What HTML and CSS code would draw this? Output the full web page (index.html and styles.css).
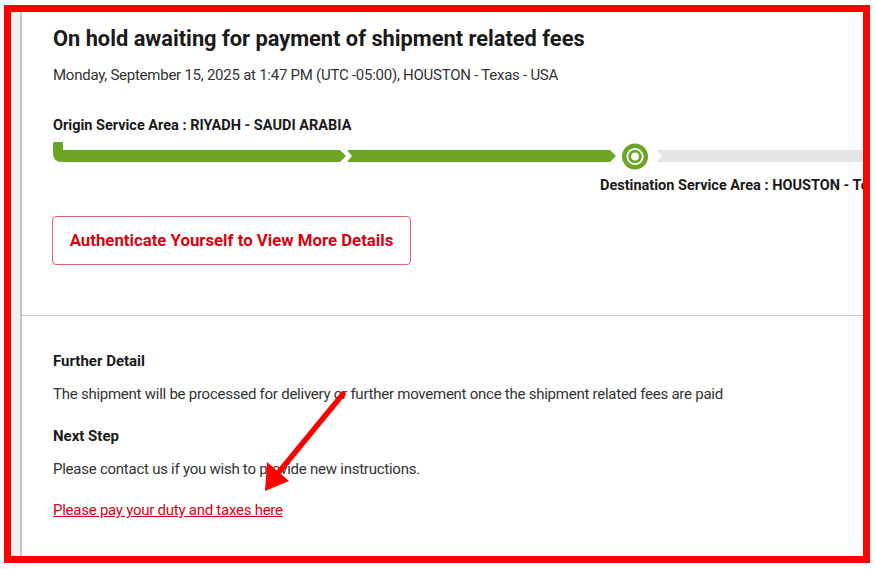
FILE: index.html
```html
<!DOCTYPE html>
<html lang="en">
<head>
<meta charset="utf-8">
<title>Shipment status</title>
<link rel="stylesheet" href="styles.css">
</head>
<body>
<div class="frame">
  <div class="side"></div>
  <div class="panel">
    <section class="status">
      <h1 class="title">On hold awaiting for payment of shipment related fees</h1>
      <p class="date">Monday, September 15, 2025 at 1:47 PM (UTC -05:00), HOUSTON - Texas - USA</p>
      <p class="area">Origin Service Area : RIYADH - SAUDI ARABIA</p>
      <svg class="track" width="830" height="30" viewBox="0 0 830 30">
        <path d="M0 1.5 Q0 0 1.5 0 L10 0 L10 8 L287 8 L293 14 L287 20 L9 20 Q0 20 0 11 Z" fill="#6aa626"/>
        <path d="M294 8 L557 8 L563 14 L557 20 L294 20 L299 14 Z" fill="#6aa626"/>
        <circle cx="582" cy="14.5" r="13" fill="#6aa626"/>
        <circle cx="582" cy="14.5" r="8.6" fill="#ffffff"/>
        <circle cx="582" cy="14.5" r="6.8" fill="#6aa626"/>
        <circle cx="582" cy="14.5" r="3.9" fill="#ffffff"/>
        <path d="M604 8 L830 8 L830 20 L604 20 L609 14 Z" fill="#e5e5e5"/>
      </svg>
      <p class="area dest">Destination Service Area : HOUSTON - Texas - USA</p>
      <a class="auth" href="#">Authenticate Yourself to View More Details</a>
    </section>
    <section class="details">
      <h2 class="label">Further Detail</h2>
      <p class="text">The shipment will be processed for delivery or further movement once the shipment related fees are paid</p>
      <h2 class="label next">Next Step</h2>
      <p class="text">Please contact us if you wish to provide new instructions.</p>
      <a class="pay" href="#">Please pay your duty and taxes here</a>
    </section>
  </div>
</div>
<svg class="arrow" width="877" height="569" viewBox="0 0 877 569">
  <line x1="343" y1="394" x2="274" y2="478" stroke="#ff0000" stroke-width="5.5" stroke-linecap="round"/>
  <polygon points="265,491 267,462 289,481" fill="#ff0000"/>
</svg>
</body>
</html>
```

FILE: styles.css
```css
html, body {
  margin: 0;
  padding: 0;
  background: #ffffff;
}

body {
  width: 877px;
  height: 569px;
  overflow: hidden;
  position: relative;
  font-family: Roboto, "Liberation Sans", sans-serif;
  color: #333333;
}

.frame {
  margin: 5px 0 0 4px;
  width: 852px;
  height: 544px;
  border: 7px solid #ff0000;
  display: flex;
  overflow: hidden;
}

.side {
  width: 9px;
  flex: none;
  background: #f1f1f1;
  border-right: 2px solid #c6c6c6;
}

.panel {
  flex: 1;
  min-width: 0;
  overflow: hidden;
  background: #ffffff;
}

.status {
  padding: 14px 0 50px 31px;
  border-bottom: 1px solid #c8c8c8;
}

.title {
  margin: 0;
  font-size: 21.8px;
  line-height: 26px;
  font-weight: 700;
  color: #1a1a1a;
  white-space: nowrap;
}

.date {
  margin: 13px 0 0;
  font-size: 15px;
  line-height: 20px;
  letter-spacing: -0.25px;
  color: #333333;
  white-space: nowrap;
}

.area {
  margin: 32px 0 0;
  font-size: 14.5px;
  line-height: 18px;
  font-weight: 700;
  color: #1a1a1a;
  white-space: nowrap;
}

.track {
  display: block;
  margin-top: 7px;
}

.area.dest {
  margin: 5px 0 0 547px;
}

.auth {
  display: inline-block;
  margin-top: 21px;
  margin-left: -1px;
  width: 357px;
  height: 47px;
  line-height: 47px;
  text-align: center;
  border: 1px solid #e2616a;
  border-radius: 4px;
  color: #d40511;
  font-size: 16.8px;
  font-weight: 700;
  text-decoration: none;
}

.details {
  padding: 35px 0 0 31px;
}

.label {
  margin: 0;
  font-size: 15px;
  line-height: 20px;
  font-weight: 700;
  color: #1a1a1a;
}

.label.next {
  margin-top: 22px;
}

.text {
  margin: 13px 0 0;
  font-size: 15px;
  line-height: 20px;
  letter-spacing: -0.25px;
  color: #333333;
  white-space: nowrap;
}

.pay {
  display: inline-block;
  margin-top: 21px;
  font-size: 15px;
  line-height: 20px;
  letter-spacing: -0.25px;
  color: #d40511;
  text-decoration: underline;
}

.arrow {
  position: absolute;
  left: 0;
  top: 0;
  pointer-events: none;
}
```
